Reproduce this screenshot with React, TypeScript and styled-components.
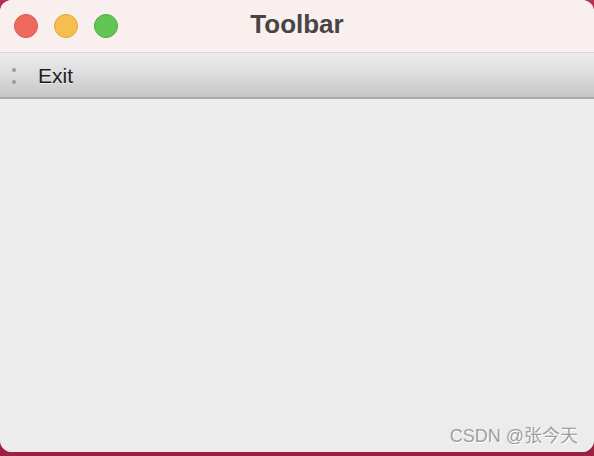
import React from 'react'
import styled, { createGlobalStyle } from 'styled-components'

const GlobalStyle = createGlobalStyle`
    html, body {
        margin: 0;
        padding: 0;
        width: 594px;
        height: 456px;
        overflow: hidden;
        background: #a82345;
    }
`

const StyledPage = styled.div`
    width: 594px;
    height: 456px;
    background: linear-gradient(180deg, #b8304f 0%, #9c2040 100%);
    font-family: "Liberation Sans", Arial, sans-serif;
`

const StyledWindow = styled.div`
    position: relative;
    display: flex;
    flex-direction: column;
    width: 594px;
    height: 452px;
    background: #ececec;
    border-radius: 12px;
    overflow: hidden;
`

const StyledTitleBar = styled.div`
    display: flex;
    flex-direction: row;
    align-items: center;
    position: relative;
    height: 52px;
    padding-left: 14px;
    gap: 16px;
    background: #f9efef;
    border-bottom: 1px solid #d9d6d6;
`

const StyledLight = styled.div<{ $color: string; $border: string }>`
    box-sizing: border-box;
    width: 24px;
    height: 24px;
    border-radius: 50%;
    background: ${p => p.$color};
    border: 1px solid ${p => p.$border};
`

const StyledTitle = styled.div`
    position: absolute;
    left: 0;
    right: 0;
    top: 9px;
    text-align: center;
    font-size: 26px;
    font-weight: bold;
    color: #474444;
    pointer-events: none;
`

const StyledToolbar = styled.div`
    display: flex;
    flex-direction: row;
    align-items: center;
    height: 44px;
    padding-left: 12px;
    background: linear-gradient(180deg, #ececec 0%, #dcdcdc 50%, #c6c6c6 100%);
    border-bottom: 2px solid #a9a9a9;
`

const StyledHandle = styled.div`
    display: flex;
    flex-direction: column;
    gap: 8px;
    width: 4px;
    margin-right: 22px;
    margin-top: 1px;
`

const StyledDot = styled.span`
    width: 4px;
    height: 4px;
    border-radius: 50%;
    background: #9a9a9a;
`

const StyledAction = styled.div`
    font-size: 21px;
    color: #1e1e1e;
    margin-top: 2px;
    text-shadow: 0 1px 0 rgba(255, 255, 255, 0.5);
`

const StyledBody = styled.div`
    flex: 1;
    background: #ececec;
`

const StyledWatermark = styled.div`
    position: absolute;
    right: 16px;
    bottom: 5px;
    font-family: "Liberation Sans", "Noto Sans CJK SC", sans-serif;
    font-size: 18px;
    color: #9e9e9e;
    text-shadow: 1px 1px 0 #ffffff;
`

const App = () => {
    return (
        <StyledPage>
            <GlobalStyle />
            <StyledWindow>
                <StyledTitleBar>
                    <StyledLight $color="#ee6a5f" $border="#d9574d" />
                    <StyledLight $color="#f6be4f" $border="#dea537" />
                    <StyledLight $color="#62c655" $border="#4faa43" />
                    <StyledTitle>Toolbar</StyledTitle>
                </StyledTitleBar>
                <StyledToolbar>
                    <StyledHandle>
                        <StyledDot />
                        <StyledDot />
                    </StyledHandle>
                    <StyledAction>Exit</StyledAction>
                </StyledToolbar>
                <StyledBody />
                <StyledWatermark>CSDN @张今天</StyledWatermark>
            </StyledWindow>
        </StyledPage>
    )
}

export default App
